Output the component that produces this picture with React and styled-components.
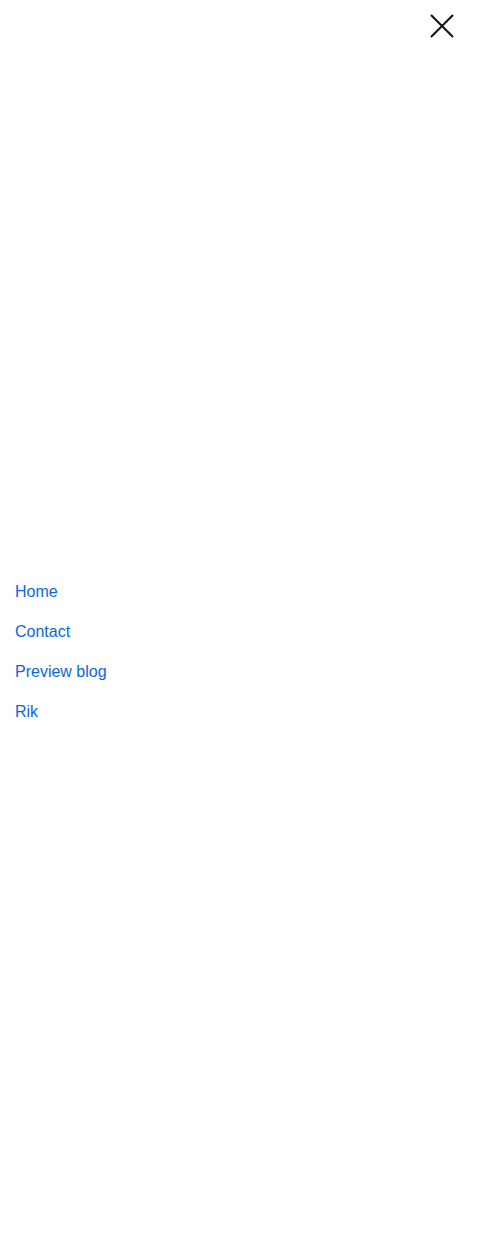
import React from "react";
import styled, { createGlobalStyle } from "styled-components";

const Global = createGlobalStyle`
  html, body { margin: 0; padding: 0; background: #fff; }
  body { font-family: "Liberation Sans", Arial, sans-serif; }
`;

const Overlay = styled.div`
  display: flex;
  flex-direction: column;
  height: 1239px;
  background: #fff;
`;

const Header = styled.div`
  display: flex;
  justify-content: flex-end;
  height: 65px;
  padding: 11px 42px 0 0;
  box-sizing: border-box;
`;

const CloseButton = styled.button`
  width: 30px;
  height: 30px;
  padding: 0;
  border: none;
  background: none;
  display: flex;
  align-items: center;
  justify-content: center;
  cursor: pointer;
`;

const Body = styled.nav`
  flex: 1;
  display: flex;
  flex-direction: column;
  justify-content: center;
`;

const List = styled.ul`
  list-style: none;
  margin: 0;
  padding: 0 0 0 15px;
`;

const Item = styled.li`
  height: 40px;
  display: flex;
  align-items: center;
`;

const Link = styled.a`
  color: #0b68da;
  font-size: 16px;
  text-decoration: none;
`;

const links = ["Home", "Contact", "Preview blog", "Rik"];

export default function App() {
  return (
    <>
      <Global />
      <Overlay>
        <Header>
          <CloseButton aria-label="Close">
            <svg width="24" height="24" viewBox="0 0 24 24">
              <path d="M1 1L23 23M23 1L1 23" stroke="#111" strokeWidth="2" fill="none" />
            </svg>
          </CloseButton>
        </Header>
        <Body>
          <List>
            {links.map((l) => (
              <Item key={l}>
                <Link href="#">{l}</Link>
              </Item>
            ))}
          </List>
        </Body>
      </Overlay>
    </>
  );
}
